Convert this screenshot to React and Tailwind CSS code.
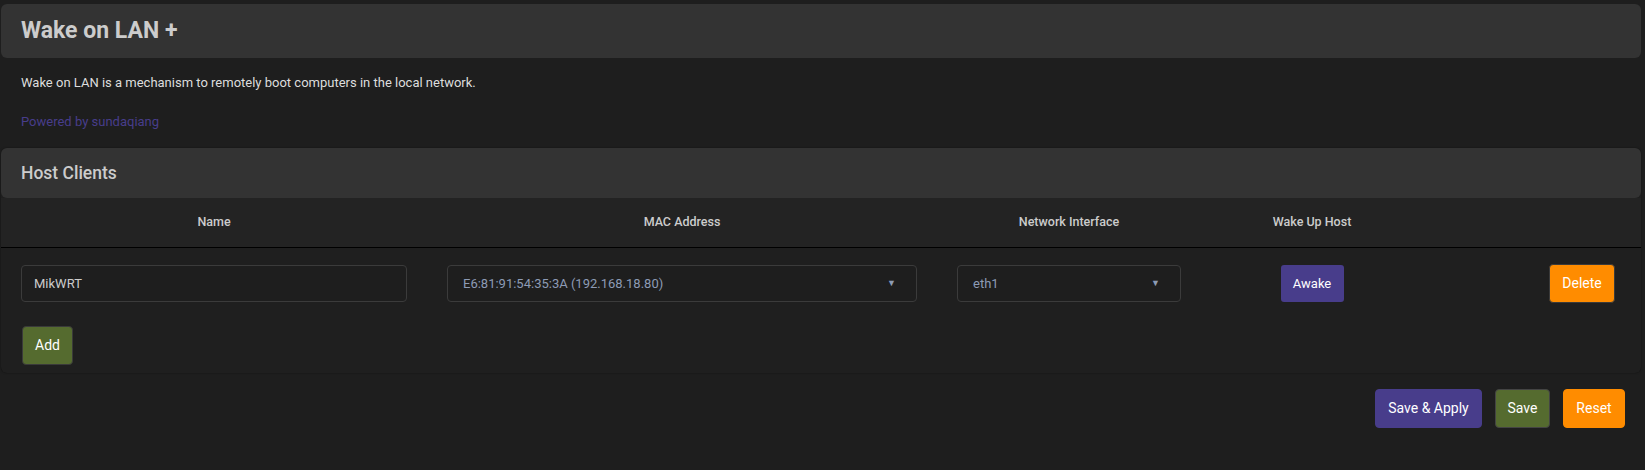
import { useState } from 'react';

const font = { fontFamily: 'Roboto, "Noto Sans", "Liberation Sans", sans-serif' };

function Btn({ children, className = '' }) {
  return (
    <button
      type="button"
      className={`h-[39px] whitespace-nowrap rounded-[4px] border text-[14px] font-normal text-white ${className}`}
    >
      {children}
    </button>
  );
}

function FakeSelect({ value, className = '' }) {
  return (
    <div
      className={`flex h-[37px] items-center justify-between rounded-[4px] border border-[#3b3b3b] bg-[#1e1e1e] pl-[15px] pr-[20px] text-[13px] text-[#8d9bb5] ${className}`}
    >
      <span>{value}</span>
      <span className="text-[9px] text-[#8d9bb5]">▼</span>
    </div>
  );
}

export default function App() {
  const [name, setName] = useState('MikWRT');

  return (
    <div className="min-h-[470px] bg-[#1e1e1e] pl-[1px] pr-[4px] pt-[4px]" style={font}>
      {/* Page title */}
      <div className="flex h-[54px] items-center rounded-[6px] bg-[#333333] px-[20px]">
        <h2 className="text-[23px] font-bold text-[#cccccc]">Wake on LAN +</h2>
      </div>

      <p className="mt-[15px] px-[20px] text-[13px] leading-[20px] text-[#dddddd]">
        Wake on LAN is a mechanism to remotely boot computers in the local network.
      </p>
      <p className="mt-[19px] px-[20px] text-[13px] leading-[20px] text-[#483d8b]">
        Powered by sundaqiang
      </p>

      {/* Host clients section */}
      <div className="mt-[16px] rounded-[6px] bg-[#1f1f1f] shadow-[0_0_2px_rgba(0,0,0,0.5)]">
        <div className="flex h-[50px] items-center rounded-[6px] bg-[#333333] px-[20px]">
          <h3 className="text-[17.5px] font-medium text-[#cccccc]">Host Clients</h3>
        </div>

        <div className="grid h-[50px] grid-cols-[426px_510px_264px_222px_1fr] items-center border-b border-black bg-[#232323] text-center text-[12.5px] font-medium text-[#cccccc]">
          <div>Name</div>
          <div>MAC Address</div>
          <div>Network Interface</div>
          <div>Wake Up Host</div>
          <div></div>
        </div>

        <div className="grid grid-cols-[426px_510px_264px_222px_1fr] items-center py-[16px]">
          <div className="px-[20px]">
            <input
              value={name}
              onChange={(e) => setName(e.target.value)}
              className="h-[37px] w-full rounded-[4px] border border-[#3b3b3b] bg-[#1e1e1e] px-[12px] text-[13px] text-[#cccccc] outline-none"
            />
          </div>
          <div className="px-[20px]">
            <FakeSelect value="E6:81:91:54:35:3A (192.168.18.80)" />
          </div>
          <div className="px-[20px]">
            <FakeSelect value="eth1" />
          </div>
          <div className="flex justify-center">
            <button
              type="button"
              className="h-[37px] w-[63px] rounded-[3px] bg-[#483d8b] text-[13px] text-white"
            >
              Awake
            </button>
          </div>
          <div className="flex justify-end pr-[26px]">
            <Btn className="h-[38px] w-[66px] border-[#3a3a3a] bg-[#ff8c00] text-[13.5px]">Delete</Btn>
          </div>
        </div>

        <div className="px-[21px] pb-[8px] pt-[7px]">
          <Btn className="w-[51px] border-[#3a3a3a] bg-[#556b2f] text-[13.5px]">Add</Btn>
        </div>
      </div>

      {/* Footer actions */}
      <div className="mt-[16px] flex justify-end gap-[13px] pr-[16px]">
        <Btn className="w-[107px] border-[#483d8b] bg-[#483d8b]">Save &amp; Apply</Btn>
        <Btn className="w-[55px] border-[#444444] bg-[#556b2f]">Save</Btn>
        <Btn className="w-[62px] border-[#ff8c00] bg-[#ff8c00]">Reset</Btn>
      </div>
    </div>
  );
}
